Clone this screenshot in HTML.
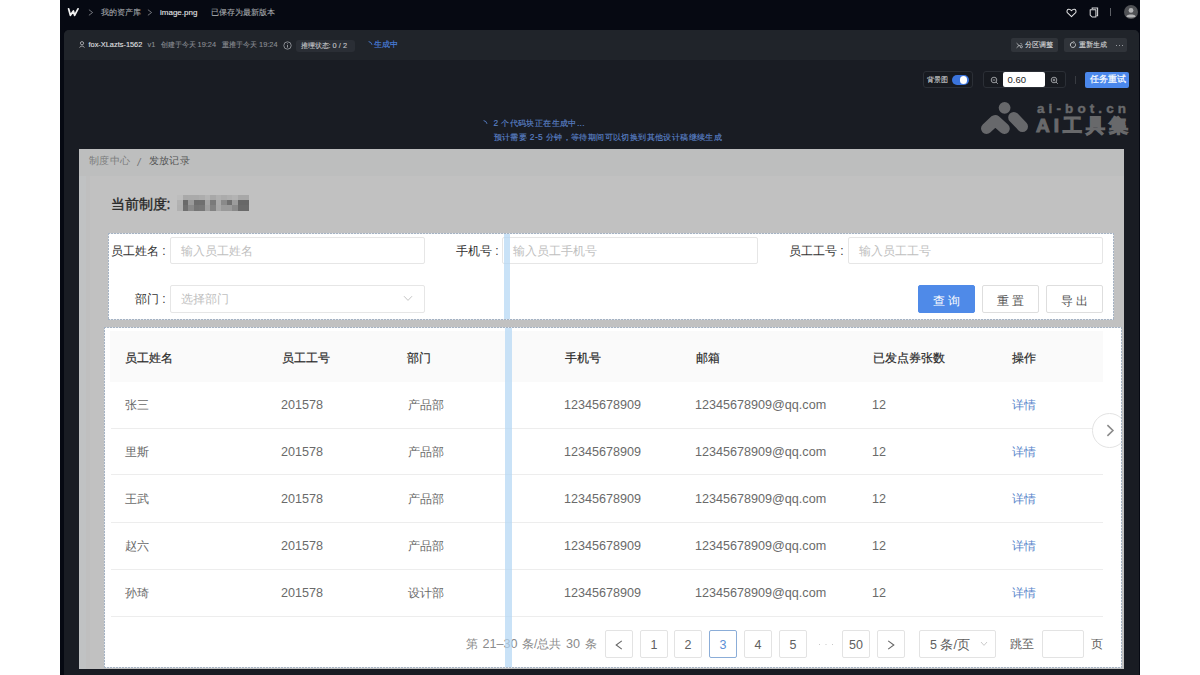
<!DOCTYPE html>
<html><head><meta charset="utf-8">
<style>
*{box-sizing:border-box;margin:0;padding:0}
html,body{width:1200px;height:675px;overflow:hidden;background:#fff;font-family:"Liberation Sans",sans-serif}
.a{position:absolute;white-space:nowrap}
.t8{font-size:8px;line-height:10px;-webkit-text-stroke-width:0.1px}
.t7{font-size:7.4px;line-height:10px;-webkit-text-stroke-width:0.1px}
.box{position:absolute;background:#fff}
.lbl{position:absolute;font-size:12px;line-height:14px;color:#333;white-space:nowrap}
.inp{position:absolute;border:1px solid #e6e6e6;border-radius:2px;background:#fff}
.ph{position:absolute;font-size:12px;line-height:14px;color:#c0c0c0;white-space:nowrap}
.btn{position:absolute;border:1px solid #dedede;border-radius:2px;background:#fff;font-size:12px;line-height:26px;padding-top:1.5px;text-align:center;color:#555;letter-spacing:3.5px;text-indent:3px}
.th{position:absolute;font-size:12px;line-height:14px;color:#2b2b2b;-webkit-text-stroke:0.2px #2b2b2b;white-space:nowrap}
.td{position:absolute;font-size:12px;line-height:14px;color:#6a6a6a;white-space:nowrap}
.n{font-size:12.6px}
.sep{position:absolute;left:7px;width:992px;height:1px;background:#ededed}
.pg{position:absolute;width:28px;height:28px;border:1px solid #e3e3e3;border-radius:2px;font-size:12.5px;line-height:28px;text-align:center;color:#606060;background:#fff}
.m{position:absolute;height:100%}
.dsh{background:repeating-linear-gradient(90deg,#a6b3c3 0 2px,rgba(166,179,195,.3) 2px 3px) left top/100% 1px no-repeat,repeating-linear-gradient(90deg,#a6b3c3 0 2px,rgba(166,179,195,.3) 2px 3px) left bottom/100% 1px no-repeat,repeating-linear-gradient(180deg,#a6b3c3 0 2px,rgba(166,179,195,.3) 2px 3px) left top/1px 100% no-repeat,repeating-linear-gradient(180deg,#a6b3c3 0 2px,rgba(166,179,195,.3) 2px 3px) right top/1px 100% no-repeat,#fff}
</style></head><body>
<div class="a" style="left:60px;top:0;width:1080px;height:675px;background:#060912"></div>
<div class="a" style="left:64px;top:30px;width:1075px;height:645px;background:#191c23;border-radius:5px 5px 0 0;overflow:hidden"><div class="a" style="left:0;top:0;width:1075px;height:30px;background:#20242a"></div></div>
<svg class="a" style="left:67px;top:7px" width="12" height="10" viewBox="0 0 12 10"><path d="M1.6 1.8 L3.4 8.3 L6.4 3.9 L7.6 8.3 L11 1.8" fill="none" stroke="#f2f2f2" stroke-width="1.75" stroke-linejoin="round" stroke-linecap="round"/></svg>
<svg class="a" style="left:88px;top:9px" width="6" height="7" viewBox="0 0 6 7"><path d="M0.9 0.7L4.6 3.5L0.9 6.3" fill="none" stroke="#8f9297" stroke-width="0.8"/></svg>
<div class="a t8" style="left:100.5px;top:8px;font-size:7.8px;color:#a6a9ae">我的资产库</div>
<svg class="a" style="left:147px;top:9px" width="6" height="7" viewBox="0 0 6 7"><path d="M0.9 0.7L4.6 3.5L0.9 6.3" fill="none" stroke="#8f9297" stroke-width="0.8"/></svg>
<div class="a t8" style="left:160px;top:7.5px;color:#e6e7e9">image.png</div>
<div class="a t8" style="left:211px;top:8px;font-size:7.8px;color:#a6a9ae">已保存为最新版本</div>
<svg class="a" style="left:78.5px;top:41px" width="6" height="7" viewBox="0 0 6 7"><circle cx="3" cy="2.2" r="1.6" fill="none" stroke="#c0c2c5" stroke-width="0.8"/><path d="M0.7 6.6 C0.9 4.6 5.1 4.6 5.3 6.6" fill="none" stroke="#c0c2c5" stroke-width="0.8"/></svg>
<div class="a t7" style="left:88.5px;top:40px;color:#e0e1e3">fox-XLazts-1562</div>
<div class="a t7" style="left:147.5px;top:40px;color:#8a8d93">v1</div>
<div class="a t7" style="left:160.5px;top:40px;color:#8a8d93">创建于今天 19:24</div>
<div class="a t7" style="left:222px;top:40px;color:#8a8d93">重推于今天 19:24</div>
<svg class="a" style="left:283px;top:40.5px" width="9" height="9" viewBox="0 0 9 9"><circle cx="4.5" cy="4.5" r="3.7" fill="none" stroke="#a0a3a8" stroke-width="0.8"/><path d="M4.5 3.9V6.6M4.5 2.4V3.1" stroke="#a0a3a8" stroke-width="0.9"/></svg>
<div class="a" style="left:296px;top:39.5px;width:59px;height:12px;border-radius:3px;background:#2a2e35"></div>
<div class="a t7" style="left:300.5px;top:40.5px;color:#c6c8cb">推理状态: 0 / 2</div>
<svg class="a" style="left:368px;top:41px" width="5" height="5" viewBox="0 0 5 5"><path d="M0.6 0.6 Q3.4 0.9 4 3.8" fill="none" stroke="#4b80da" stroke-width="0.9"/></svg>
<div class="a t8" style="left:374px;top:40px;color:#4d86e2">生成中</div>
<div class="a" style="left:1011px;top:38px;width:47px;height:14px;border-radius:2px;background:#30343a"></div>
<svg class="a" style="left:1015.5px;top:41.5px" width="7" height="7" viewBox="0 0 7 7"><path d="M0.6 1.2L3 3.5L0.6 5.8M3 3.5H4.2" fill="none" stroke="#c8cacd" stroke-width="0.8"/><circle cx="5.3" cy="4.7" r="1.1" fill="none" stroke="#c8cacd" stroke-width="0.8"/><path d="M4.5 1L6 2.6" stroke="#c8cacd" stroke-width="0.8"/></svg>
<div class="a t7" style="left:1025px;top:40px;color:#d6d7d9">分区调整</div>
<div class="a" style="left:1064px;top:38px;width:63px;height:14px;border-radius:2px;background:#30343a"></div>
<svg class="a" style="left:1068.5px;top:41px" width="8" height="8" viewBox="0 0 8 8"><path d="M6.1 2.4A2.6 2.6 0 1 1 4.3 1.3" fill="none" stroke="#d4d6d9" stroke-width="0.9"/><path d="M4.2 0.4L5.6 1.3L4.4 2.4" fill="none" stroke="#d4d6d9" stroke-width="0.7"/></svg>
<div class="a t7" style="left:1078.5px;top:40px;color:#d6d7d9">重新生成</div>
<div class="a" style="left:1116px;top:44.5px;width:1.2px;height:1.2px;background:#9a9da2;box-shadow:3px 0 0 #9a9da2,6px 0 0 #9a9da2"></div>
<svg class="a" style="left:1066px;top:7.5px" width="11" height="10" viewBox="0 0 11 10"><path d="M5.5 8.6 L1.6 4.9 C0.5 3.8 0.8 1.6 2.6 1.3 C3.8 1.1 4.8 1.9 5.5 2.7 C6.2 1.9 7.2 1.1 8.4 1.3 C10.2 1.6 10.5 3.8 9.4 4.9 Z" fill="none" stroke="#e4e5e6" stroke-width="1.05" stroke-linejoin="round"/></svg>
<svg class="a" style="left:1088.5px;top:6.5px" width="10" height="11" viewBox="0 0 10 11"><path d="M3.2 2V1H8.6V8.6H7.6" fill="none" stroke="#d6d7d9" stroke-width="1.05"/><path d="M1.2 2.7H6.9V10H3.1L1.2 8.1Z" fill="none" stroke="#d6d7d9" stroke-width="1.05" stroke-linejoin="round"/></svg>
<div class="a" style="left:1110px;top:8px;width:1px;height:8px;background:#5d6066"></div>
<svg class="a" style="left:1124px;top:5px" width="14" height="14" viewBox="0 0 14 14"><circle cx="7" cy="7" r="7" fill="#505256"/><circle cx="7" cy="5.4" r="2.4" fill="#b4b5b7"/><path d="M2.3 11.4 C3 8.9 11 8.9 11.7 11.4 C10.4 12.9 3.6 12.9 2.3 11.4Z" fill="#b4b5b7"/></svg>
<div class="a" style="left:923px;top:71px;width:50px;height:17px;border:1px solid #2b2f36;border-radius:3px;background:#171a20"></div>
<div class="a t7" style="left:927px;top:74.5px;font-size:7.2px;color:#d0d1d3">背景图</div>
<div class="a" style="left:952px;top:75px;width:17px;height:9.5px;border-radius:5px;background:#3b74dc"></div>
<div class="a" style="left:959.5px;top:76px;width:7.5px;height:7.5px;border-radius:4px;background:#fff"></div>
<div class="a" style="left:983px;top:71px;width:83px;height:17px;border:1px solid #2b2f36;border-radius:3px;background:#171a20"></div>
<svg class="a" style="left:990px;top:75.5px" width="9" height="9" viewBox="0 0 9 9"><circle cx="4" cy="4" r="2.8" fill="none" stroke="#b8babd" stroke-width="0.8"/><path d="M2.7 4H5.3M6 6L7.8 7.8" stroke="#b8babd" stroke-width="0.8"/></svg>
<div class="a" style="left:1003px;top:72px;width:42px;height:15px;border-radius:2px;background:#fff"></div>
<div class="a" style="left:1007.5px;top:73.5px;font-size:9.5px;line-height:12px;color:#1e1e1e">0.60</div>
<svg class="a" style="left:1050px;top:75.5px" width="9" height="9" viewBox="0 0 9 9"><circle cx="4" cy="4" r="2.8" fill="none" stroke="#b8babd" stroke-width="0.8"/><path d="M2.7 4H5.3M4 2.7V5.3M6 6L7.8 7.8" stroke="#b8babd" stroke-width="0.8"/></svg>
<div class="a" style="left:1075px;top:76px;width:1px;height:8px;background:#383b41"></div>
<div class="a" style="left:1085px;top:71.5px;width:44px;height:16px;border-radius:2px;background:#4b88ec"></div>
<div class="a" style="left:1090px;top:74px;font-size:8.5px;line-height:11px;color:#fff;-webkit-text-stroke:0.2px #fff">任务重试</div>
<svg class="a" style="left:483px;top:120px" width="5" height="5" viewBox="0 0 5 5"><path d="M0.6 0.6 Q3.4 0.9 4 3.8" fill="none" stroke="#5a84cf" stroke-width="0.9"/></svg>
<div class="a" style="left:493.5px;top:118px;font-size:8.4px;line-height:11px;color:#5a80c6;letter-spacing:0.4px;-webkit-text-stroke:0.15px #5a80c6">2 个代码块正在生成中...</div>
<div class="a" style="left:493.5px;top:131.5px;font-size:8.4px;line-height:11px;color:#5a80c6;letter-spacing:0.4px;-webkit-text-stroke:0.15px #5a80c6">预计需要 2-5 分钟，等待期间可以切换到其他设计稿继续生成</div>
<svg class="a" style="left:975px;top:98px" width="60" height="40" viewBox="0 0 60 40"><circle cx="29.6" cy="9.8" r="5.9" fill="#67686b"/><path d="M11.5 30.5L20.2 22.4L29.3 30.5" fill="none" stroke="#67686b" stroke-width="11" stroke-linecap="round" stroke-linejoin="round"/><path d="M38.7 19.4L47.5 28.6" fill="none" stroke="#67686b" stroke-width="11" stroke-linecap="round"/></svg>
<div class="a" style="left:1037px;top:100.5px;font-size:13.5px;line-height:15px;color:#68696b;font-weight:bold;letter-spacing:4.1px;-webkit-text-stroke:0.45px #68696b">ai-bot.cn</div>
<div class="a" style="left:1036px;top:116px;font-size:19px;line-height:20px;color:#68696b;font-weight:bold;letter-spacing:4px;-webkit-text-stroke:1.1px #68696b">AI工具集</div>
<div class="a" style="left:79px;top:149px;width:1045px;height:520px;background:#bdbebe;overflow:hidden">
  <div class="a" style="left:0;top:27px;width:7px;height:493px;background:#c0c2c3"></div><div class="a" style="left:7px;top:27px;width:4px;height:493px;background:#bfbfbf"></div><div class="a" style="left:11px;top:27px;width:1034px;height:493px;background:#c1c1c1"></div>
  <div class="a" style="left:10px;top:6px;font-size:10.4px;line-height:12px;letter-spacing:0.4px;color:#7b7c7c">制度中心</div>
  <div class="a" style="left:58.5px;top:6.5px;font-size:10.5px;line-height:12px;color:#6f7070;font-style:italic">/</div>
  <div class="a" style="left:69.5px;top:6px;font-size:10.4px;line-height:12px;letter-spacing:0.4px;color:#555656">发放记录</div>
  <div class="a" style="left:31.5px;top:47px;font-size:14px;line-height:17px;color:#262626;-webkit-text-stroke:0.35px #262626">当前制度:</div>
  <div class="a" style="left:98px;top:46.2px;width:72px;height:16px;filter:blur(0.6px)"><div class="a" style="left:0.0px;top:0;width:5.6px;height:4.6px;background:#bdbdbd"></div><div class="a" style="left:0.0px;top:4.6px;width:5.6px;height:5.6px;background:#b2b2b2"></div><div class="a" style="left:0.0px;top:10.2px;width:5.6px;height:5.4px;background:#b0b0b0"></div><div class="a" style="left:5.5px;top:0;width:5.6px;height:4.6px;background:#a9a9a9"></div><div class="a" style="left:5.5px;top:4.6px;width:5.6px;height:5.6px;background:#6a6a6a"></div><div class="a" style="left:5.5px;top:10.2px;width:5.6px;height:5.4px;background:#707070"></div><div class="a" style="left:11.0px;top:0;width:5.6px;height:4.6px;background:#aaaaaa"></div><div class="a" style="left:11.0px;top:4.6px;width:5.6px;height:5.6px;background:#9a9a9a"></div><div class="a" style="left:11.0px;top:10.2px;width:5.6px;height:5.4px;background:#8a8a8a"></div><div class="a" style="left:16.5px;top:0;width:5.6px;height:4.6px;background:#aaaaaa"></div><div class="a" style="left:16.5px;top:4.6px;width:5.6px;height:5.6px;background:#6e6e6e"></div><div class="a" style="left:16.5px;top:10.2px;width:5.6px;height:5.4px;background:#757575"></div><div class="a" style="left:22.0px;top:0;width:5.6px;height:4.6px;background:#adadad"></div><div class="a" style="left:22.0px;top:4.6px;width:5.6px;height:5.6px;background:#6f6f6f"></div><div class="a" style="left:22.0px;top:10.2px;width:5.6px;height:5.4px;background:#777777"></div><div class="a" style="left:27.5px;top:0;width:5.6px;height:4.6px;background:#b5b5b5"></div><div class="a" style="left:27.5px;top:4.6px;width:5.6px;height:5.6px;background:#a5a5a5"></div><div class="a" style="left:27.5px;top:10.2px;width:5.6px;height:5.4px;background:#a0a0a0"></div><div class="a" style="left:33.0px;top:0;width:5.6px;height:4.6px;background:#a8a8a8"></div><div class="a" style="left:33.0px;top:4.6px;width:5.6px;height:5.6px;background:#7a7a7a"></div><div class="a" style="left:33.0px;top:10.2px;width:5.6px;height:5.4px;background:#828282"></div><div class="a" style="left:38.5px;top:0;width:5.6px;height:4.6px;background:#b0b0b0"></div><div class="a" style="left:38.5px;top:4.6px;width:5.6px;height:5.6px;background:#aaaaaa"></div><div class="a" style="left:38.5px;top:10.2px;width:5.6px;height:5.4px;background:#a8a8a8"></div><div class="a" style="left:44.0px;top:0;width:5.6px;height:4.6px;background:#ababab"></div><div class="a" style="left:44.0px;top:4.6px;width:5.6px;height:5.6px;background:#8a8a8a"></div><div class="a" style="left:44.0px;top:10.2px;width:5.6px;height:5.4px;background:#9a9a9a"></div><div class="a" style="left:49.5px;top:0;width:5.6px;height:4.6px;background:#afafaf"></div><div class="a" style="left:49.5px;top:4.6px;width:5.6px;height:5.6px;background:#707070"></div><div class="a" style="left:49.5px;top:10.2px;width:5.6px;height:5.4px;background:#9a9a9a"></div><div class="a" style="left:55.0px;top:0;width:5.6px;height:4.6px;background:#b3b3b3"></div><div class="a" style="left:55.0px;top:4.6px;width:5.6px;height:5.6px;background:#9c9c9c"></div><div class="a" style="left:55.0px;top:10.2px;width:5.6px;height:5.4px;background:#8a8a8a"></div><div class="a" style="left:60.5px;top:0;width:5.6px;height:4.6px;background:#a8a8a8"></div><div class="a" style="left:60.5px;top:4.6px;width:5.6px;height:5.6px;background:#676767"></div><div class="a" style="left:60.5px;top:10.2px;width:5.6px;height:5.4px;background:#6a6a6a"></div><div class="a" style="left:66.0px;top:0;width:5.6px;height:4.6px;background:#a8a8a8"></div><div class="a" style="left:66.0px;top:4.6px;width:5.6px;height:5.6px;background:#676767"></div><div class="a" style="left:66.0px;top:10.2px;width:5.6px;height:5.4px;background:#6a6a6a"></div></div>
</div>
<div class="box dsh" style="left:108px;top:233px;width:1006px;height:87px"></div>
<div class="lbl" style="left:111px;top:244px">员工姓名 :</div>
<div class="inp" style="left:170px;top:237px;width:255px;height:27px"></div>
<div class="ph" style="left:180.5px;top:244px">输入员工姓名</div>
<div class="lbl" style="left:456px;top:244px">手机号 :</div>
<div class="inp" style="left:502px;top:237px;width:256px;height:27px"></div>
<div class="ph" style="left:513px;top:244px">输入员工手机号</div>
<div class="lbl" style="left:789px;top:244px">员工工号 :</div>
<div class="inp" style="left:848px;top:237px;width:255px;height:27px"></div>
<div class="ph" style="left:859px;top:244px">输入员工工号</div>
<div class="lbl" style="left:135px;top:292px">部门 :</div>
<div class="inp" style="left:170px;top:285px;width:255px;height:28px"></div>
<div class="ph" style="left:180.5px;top:292px">选择部门</div>
<svg class="a" style="left:403px;top:295px" width="10" height="7" viewBox="0 0 10 7"><path d="M1 1.2L5 5.4L9 1.2" fill="none" stroke="#c4c4c4" stroke-width="1"/></svg>
<div class="btn" style="left:918px;top:285px;width:57px;height:28px;background:#4f8ae8;border-color:#4f8ae8;color:#fff">查询</div>
<div class="btn" style="left:982px;top:285px;width:57px;height:28px">重置</div>
<div class="btn" style="left:1046px;top:285px;width:57px;height:28px">导出</div>
<div class="box dsh" style="left:104px;top:327px;width:1018px;height:341px">
  <div class="a" style="left:6px;top:4px;width:993px;height:51px;background:#fafafa"></div>
  <div class="sep" style="top:101px"></div>
  <div class="sep" style="top:147px"></div>
  <div class="sep" style="top:195px"></div>
  <div class="sep" style="top:242px"></div>
  <div class="sep" style="top:289px"></div>
</div>
<div class="th" style="left:125px;top:351px">员工姓名</div>
<div class="th" style="left:282px;top:351px">员工工号</div>
<div class="th" style="left:407px;top:351px">部门</div>
<div class="th" style="left:565px;top:351px">手机号</div>
<div class="th" style="left:696px;top:351px">邮箱</div>
<div class="th" style="left:873px;top:351px">已发点券张数</div>
<div class="th" style="left:1012px;top:351px">操作</div>
<div class="td" style="left:124.5px;top:398px">张三</div>
<div class="td n" style="left:281px;top:398px">201578</div>
<div class="td" style="left:407.5px;top:398px">产品部</div>
<div class="td n" style="left:564px;top:398px">12345678909</div>
<div class="td n" style="left:695px;top:398px">12345678909@qq.com</div>
<div class="td n" style="left:872px;top:398px">12</div>
<div class="td" style="left:1012px;top:398px;color:#5986cb">详情</div>
<div class="td" style="left:124.5px;top:445px">里斯</div>
<div class="td n" style="left:281px;top:445px">201578</div>
<div class="td" style="left:407.5px;top:445px">产品部</div>
<div class="td n" style="left:564px;top:445px">12345678909</div>
<div class="td n" style="left:695px;top:445px">12345678909@qq.com</div>
<div class="td n" style="left:872px;top:445px">12</div>
<div class="td" style="left:1012px;top:445px;color:#5986cb">详情</div>
<div class="td" style="left:124.5px;top:492px">王武</div>
<div class="td n" style="left:281px;top:492px">201578</div>
<div class="td" style="left:407.5px;top:492px">产品部</div>
<div class="td n" style="left:564px;top:492px">12345678909</div>
<div class="td n" style="left:695px;top:492px">12345678909@qq.com</div>
<div class="td n" style="left:872px;top:492px">12</div>
<div class="td" style="left:1012px;top:492px;color:#5986cb">详情</div>
<div class="td" style="left:124.5px;top:539px">赵六</div>
<div class="td n" style="left:281px;top:539px">201578</div>
<div class="td" style="left:407.5px;top:539px">产品部</div>
<div class="td n" style="left:564px;top:539px">12345678909</div>
<div class="td n" style="left:695px;top:539px">12345678909@qq.com</div>
<div class="td n" style="left:872px;top:539px">12</div>
<div class="td" style="left:1012px;top:539px;color:#5986cb">详情</div>
<div class="td" style="left:124.5px;top:586px">孙琦</div>
<div class="td n" style="left:281px;top:586px">201578</div>
<div class="td" style="left:407.5px;top:586px">设计部</div>
<div class="td n" style="left:564px;top:586px">12345678909</div>
<div class="td n" style="left:695px;top:586px">12345678909@qq.com</div>
<div class="td n" style="left:872px;top:586px">12</div>
<div class="td" style="left:1012px;top:586px;color:#5986cb">详情</div>
<div class="td" style="left:466px;top:637px;color:#8a8a8a;word-spacing:1.2px">第 <span class="n">21–30</span> 条/总共 <span class="n">30</span> 条</div>
<div class="pg" style="left:605px;top:630px"><svg width="8" height="10" viewBox="0 0 8 10" style="position:absolute;left:9px;top:8.8px"><path d="M6.8 0.9L1.2 5L6.8 9.1" fill="none" stroke="#666" stroke-width="1.1"/></svg></div>
<div class="pg" style="left:640px;top:630px">1</div>
<div class="pg" style="left:674px;top:630px">2</div>
<div class="pg" style="left:744px;top:630px">4</div>
<div class="pg" style="left:779px;top:630px">5</div>
<div class="pg" style="left:842px;top:630px">50</div>
<div class="pg" style="left:709px;top:630px;border-color:#8badd8;color:#5b8fd6">3</div>
<div class="a" style="left:818.5px;top:643.5px;width:1.6px;height:1.6px;border-radius:1px;background:#b8b8b8;box-shadow:6.5px 0 0 #b8b8b8,13px 0 0 #b8b8b8"></div>
<div class="pg" style="left:877px;top:630px"><svg width="8" height="10" viewBox="0 0 8 10" style="position:absolute;left:9px;top:8.8px"><path d="M1.2 0.9L6.8 5L1.2 9.1" fill="none" stroke="#666" stroke-width="1.1"/></svg></div>
<div class="pg" style="left:919px;top:630px;width:77px;text-align:left;padding-left:10px">5 条/页</div>
<svg class="a" style="left:980px;top:641px" width="8" height="6" viewBox="0 0 8 6"><path d="M1 1L4 4.4L7 1" fill="none" stroke="#c4c4c4" stroke-width="0.9"/></svg>
<div class="td" style="left:1010px;top:637px;color:#606060">跳至</div>
<div class="pg" style="left:1042px;top:630px;width:42px"></div>
<div class="td" style="left:1091px;top:637px;color:#606060">页</div>
<div class="a" style="left:504px;top:234px;width:6px;height:85px;background:rgba(178,214,243,.7)"></div>
<div class="a" style="left:505px;top:328px;width:7px;height:339px;background:rgba(178,214,243,.7)"></div>
<div class="a" style="left:1092px;top:412px;width:29px;height:36px;overflow:hidden">
  <div class="a" style="left:0;top:0.5px;width:35px;height:35px;border:1px solid #e3e3e3;border-radius:50%;background:#fff"></div>
  <svg class="a" style="left:14px;top:11.5px" width="9" height="13" viewBox="0 0 9 13"><path d="M1.4 1.2L6.9 6.5L1.4 11.8" fill="none" stroke="#8a8a8a" stroke-width="1.6"/></svg>
</div>
</body></html>
